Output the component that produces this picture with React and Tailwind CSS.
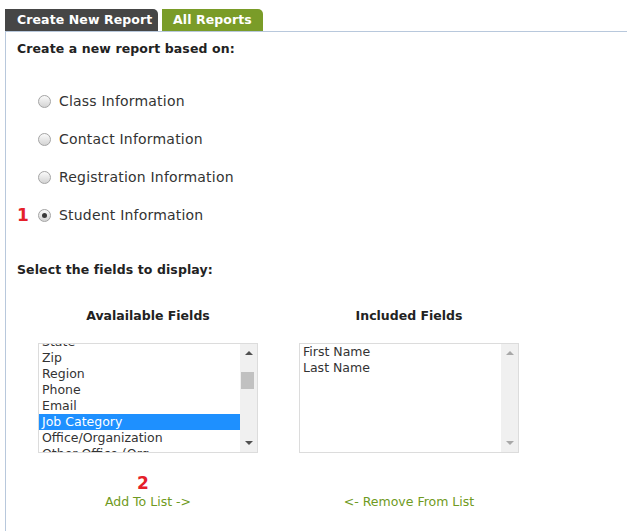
import React from 'react';

const availableFields = ['State', 'Zip', 'Region', 'Phone', 'Email', 'Job Category', 'Office/Organization', 'Other Office (Org'];
const includedFields = ['First Name', 'Last Name'];

const reportTypes = [
    { label: 'Class Information' },
    { label: 'Contact Information' },
    { label: 'Registration Information' },
    { label: 'Student Information', checked: true, marker: '1' },
];

const Radio = ({ checked }) => (
    <span className="w-[13px] h-[13px] rounded-full border border-[#a4a4a4] bg-linear-to-b from-[#fafafa] to-[#d4d4d4] flex items-center justify-center shrink-0">
        {checked && <span className="w-[5px] h-[5px] rounded-full bg-[#3a3a3a]"></span>}
    </span>
);

const Scrollbar = ({ enabled }) => (
    <div className="w-[17px] bg-[#f0f0f0] flex flex-col items-center justify-between py-[7px] relative">
        <span
            className={`w-0 h-0 border-l-[4px] border-r-[4px] border-b-[4px] border-l-transparent border-r-transparent ${
                enabled ? 'border-b-[#505050]' : 'border-b-[#a8a8a8]'
            }`}
        ></span>
        {enabled && <span className="absolute left-[1px] top-[28px] w-[13px] h-[17px] bg-[#c1c1c1]"></span>}
        <span
            className={`w-0 h-0 border-l-[4px] border-r-[4px] border-t-[4px] border-l-transparent border-r-transparent ${
                enabled ? 'border-t-[#505050]' : 'border-t-[#a8a8a8]'
            }`}
        ></span>
    </div>
);

const ListBox = ({ items, selected, offset, scrollable }) => (
    <div className="w-[220px] h-[110px] border border-[#dcdcdc] bg-white flex">
        <div className="flex-1 overflow-hidden">
            <div className={offset ? '-mt-[10px]' : ''}>
                {items.map((item) => (
                    <div
                        key={item}
                        className={`h-[16px] leading-[16px] pl-[3px] text-[12.5px] whitespace-nowrap ${
                            item === selected ? 'bg-[#1e90ff] text-white' : 'text-[#333]'
                        }`}
                    >
                        {item}
                    </div>
                ))}
            </div>
        </div>
        <Scrollbar enabled={scrollable} />
    </div>
);

const App = () => {
    return (
        <div className="w-[627px] h-[531px] bg-white overflow-hidden" style={{ fontFamily: '"DejaVu Sans", Verdana, sans-serif' }}>
            {/* Tabs */}
            <div className="flex gap-[4px] pl-[5px] pt-[9px]">
                <div className="w-[153px] h-[22px] bg-[#464646] rounded-tr-[5px] text-white font-bold text-[12.5px] leading-[22px] pl-[12px] tracking-[0.1px]">
                    Create New Report
                </div>
                <div className="w-[101px] h-[22px] bg-[#7a9c28] rounded-tr-[5px] text-white font-bold text-[12.5px] leading-[22px] pl-[11px] tracking-[0.1px]">
                    All Reports
                </div>
            </div>

            {/* Panel */}
            <div className="ml-[5px] border-l border-t border-[#b8c8dc] h-[500px] pl-[11px]">
                <h2 className="mt-[8px] h-[18px] leading-[18px] text-[12.5px] font-bold text-[#222] tracking-[0.1px]">
                    Create a new report based on:
                </h2>

                <div className="mt-[24px]">
                    {reportTypes.map((type) => (
                        <div key={type.label} className="h-[38px] flex items-center">
                            <span className="w-[21px] text-[#e5202a] font-bold text-[17px] leading-none">{type.marker}</span>
                            <Radio checked={type.checked} />
                            <span className="ml-[8px] text-[14px] text-[#333] tracking-[0.2px]">{type.label}</span>
                        </div>
                    ))}
                </div>

                <h2 className="mt-[27px] h-[18px] leading-[18px] text-[12.5px] font-bold text-[#222] tracking-[0.1px]">
                    Select the fields to display:
                </h2>

                <div className="mt-[28px] ml-[21px] grid grid-cols-[220px_220px] gap-x-[41px]">
                    <div className="h-[18px] leading-[18px] text-center text-[12.5px] font-bold text-[#222]">Avalailable Fields</div>
                    <div className="h-[18px] leading-[18px] text-center text-[12.5px] font-bold text-[#222]">Included Fields</div>

                    <div className="mt-[18px]">
                        <ListBox items={availableFields} selected="Job Category" offset scrollable />
                    </div>
                    <div className="mt-[18px]">
                        <ListBox items={includedFields} />
                    </div>

                    <div className="mt-[22px] flex flex-col items-center">
                        <span className="h-[16px] leading-[16px] text-[#e5202a] font-bold text-[17px] -ml-[10px]">2</span>
                        <a href="#" className="mt-[3px] h-[16px] leading-[16px] text-[12.5px] text-[#6f9a22]">
                            Add To List -&gt;
                        </a>
                    </div>
                    <div className="mt-[41px] flex justify-center">
                        <a href="#" className="h-[16px] leading-[16px] text-[12.5px] text-[#6f9a22]">
                            &lt;- Remove From List
                        </a>
                    </div>
                </div>
            </div>
        </div>
    );
};

export default App;
